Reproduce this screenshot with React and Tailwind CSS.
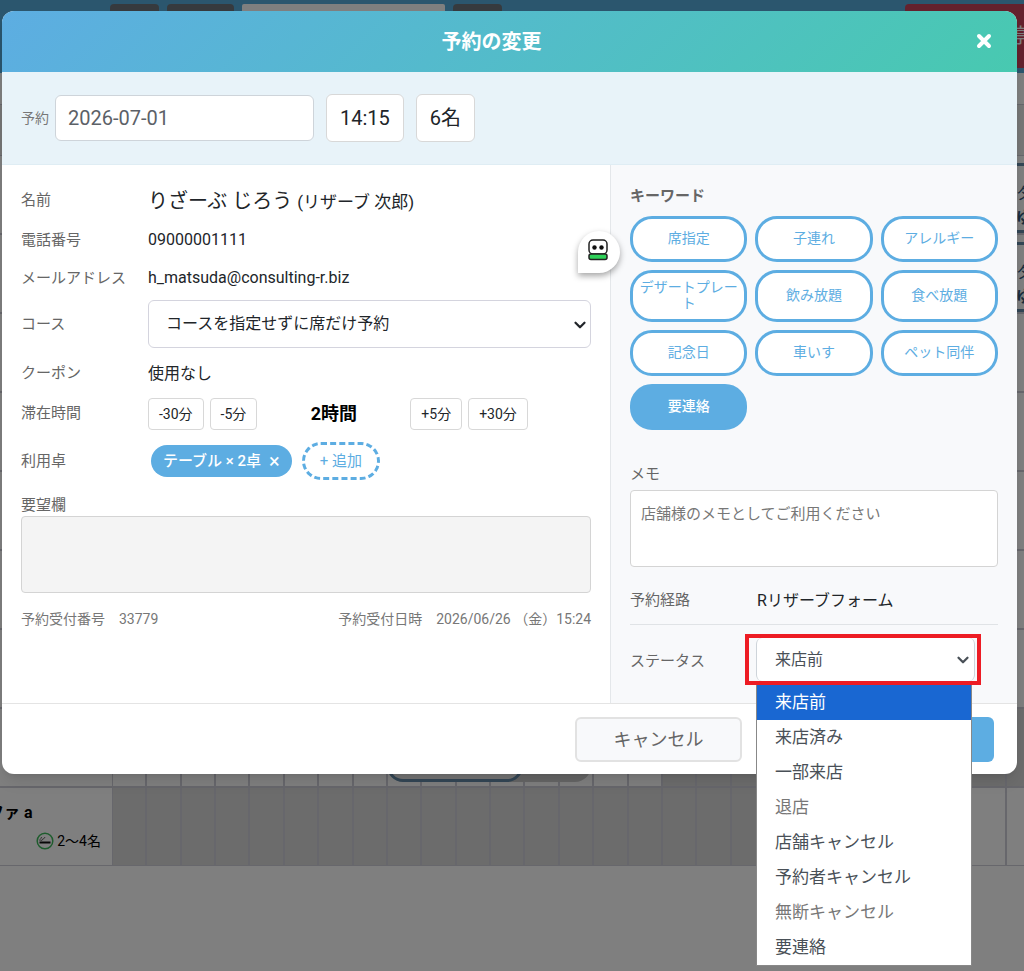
import { useState } from "react";
import { ChevronDown } from "lucide-react";
import clsx from "clsx";

const STATUSES = [
  { name: "来店前" },
  { name: "来店済み" },
  { name: "一部来店" },
  { name: "退店", muted: true },
  { name: "店舗キャンセル" },
  { name: "予約者キャンセル" },
  { name: "無断キャンセル", muted: true },
  { name: "要連絡" },
];

const KEYWORDS = [
  "席指定", "子連れ", "アレルギー",
  "デザートプレート", "飲み放題", "食べ放題",
  "記念日", "車いす", "ペット同伴",
  "要連絡",
];

// closedFrom / closedTo: range of 15 min slots that cannot be booked
const TABLES = [
  { id: 1, bookings: ["late"] },
  { id: 2, bookings: ["late"] },
  { id: 3 },
  { id: 4 },
  { id: 5 },
  { id: 6 },
  { id: 7 },
  { id: 8, closedFrom: 16, closedTo: 27, bookings: ["current"] },
  { id: 9, name: "ソファ a", seats: "2〜4名", closedFrom: 0, closedTo: 25 },
];

const SLOTS = Array.from({ length: 27 }, (_, i) => i);

function SmokingIcon() {
  return (
    <svg viewBox="0 0 18 18" className="h-[18px] w-[18px]" fill="none" aria-hidden>
      <circle cx="9" cy="9" r="7.800" stroke="#3cb95a" strokeWidth="1.500" />
      <path d="M3.500 10.500h11" stroke="#111" strokeWidth="2" />
      <path d="M4 9c-.5-2.500 1.500-2 1.500-4M5.500 9c0-2.500 3-1.500 3.500-4" stroke="#666" strokeWidth="1" />
    </svg>
  );
}

function TableRow({ table }) {
  const closed = (i) => i >= table.closedFrom && i < table.closedTo;
  return (
    <div className="flex h-[79px] border-b-2 border-[#ceced8] last:h-[78px] last:border-b">
      <div className="-ml-16 flex w-[177px] shrink-0 flex-col justify-center gap-1 border-r border-[#ceced8] bg-white pr-[11px]">
        {table.name && (
          <>
            <span className="pl-9 text-base font-bold leading-6 text-black">{table.name}</span>
            <span className="flex items-center justify-end gap-[3px] text-sm leading-6 text-black">
              <SmokingIcon />
              {table.seats}
            </span>
          </>
        )}
      </div>
      <div className="relative grid w-[928px] shrink-0 grid-cols-27">
        {SLOTS.map((i) => (
          <div key={i} className={clsx("border-r-2 border-[#ceced8]", closed(i) ? "bg-[#d8d8d8]" : "bg-white")} />
        ))}
        {table.bookings?.includes("late") && (
          <div className="absolute left-[893px] top-[7px] h-[70px] w-40 border-y-3 border-[#668caa] bg-white pl-2.5 pt-4 text-base leading-6 text-[#345a7c]">
            タ
            <br />
            <b>ゆ</b>
          </div>
        )}
        {table.bookings?.includes("current") && (
          <>
            <div className="absolute left-[380px] top-1 h-[69px] w-[98px] rounded-2xl bg-[#cbcbcb]" />
            <div className="absolute left-[274px] top-1 h-[69px] w-[136px] rounded-2xl border-3 border-[#668caa] bg-[#e9e9e9]" />
          </>
        )}
      </div>
    </div>
  );
}

function Timeline() {
  return (
    <div className="min-h-screen bg-white">
      <header className="flex h-[73px] items-start gap-2 bg-[#56acdc] pl-[110px] pt-1">
        <button type="button" aria-label="前日" className="h-10 w-[49px] rounded bg-[#6c757d]" />
        <button type="button" aria-label="本日" className="h-10 w-[67px] rounded bg-[#6c757d]" />
        <div className="h-10 w-[203px] rounded-xs bg-white" />
        <button type="button" aria-label="翌日" className="h-10 w-[49px] rounded bg-[#6c757d]" />
        <button type="button" className="-mr-16 ml-auto h-16 w-[183px] rounded bg-[#c9435b] pl-[103px] text-left text-xl text-white">
          停止
        </button>
      </header>
      <div className="h-[83px] border-b border-[#ceced8] bg-[#ececec]">
        <div className="h-8 border-b border-[#ceced8] bg-white" />
      </div>
      <div>
        {TABLES.map((t) => (
          <TableRow key={t.id} table={t} />
        ))}
      </div>
    </div>
  );
}

function Field({ label, className, children }) {
  return (
    <div className={clsx("flex items-center", className)}>
      <span className="w-[127px] shrink-0 text-[15px] text-[#666]">{label}</span>
      <div className="min-w-0 flex-1">{children}</div>
    </div>
  );
}

function StepButton({ children }) {
  return (
    <button type="button" className="h-8 shrink-0 rounded border border-[#d8d8d8] bg-white px-2.5 text-sm text-[#212529]">
      {children}
    </button>
  );
}

function AssistantBadge() {
  return (
    <button
      type="button"
      aria-label="RoboForm"
      className="absolute right-[-10px] top-[66px] z-10 flex h-[42px] w-[42px] items-center justify-center rounded-full rounded-bl-xs bg-white pb-1 pr-0.5 shadow-[0_3px_6px_rgba(0,0,0,0.35)]"
    >
      <svg viewBox="0 0 20 22" className="h-[22px] w-5" aria-hidden>
        <rect x="1" y="1" width="18" height="14" rx="4" fill="#fff" stroke="#222" strokeWidth="1.500" />
        <rect x="1" y="15" width="18" height="5.500" rx="2" fill="#2fd159" stroke="#222" strokeWidth="1.500" />
        <circle cx="6.500" cy="8.500" r="2.200" fill="#111" />
        <circle cx="13.500" cy="8.500" r="2.200" fill="#111" />
      </svg>
    </button>
  );
}

function BookingDetails() {
  return (
    <section className="px-[19px] pt-4">
      <Field label="名前" className="h-[39px]">
        <span className="text-xl text-[#212529]">
          りざーぶ じろう <span className="text-[17px]">(リザーブ 次郎)</span>
        </span>
      </Field>
      <Field label="電話番号" className="h-10">09000001111</Field>
      <Field label="メールアドレス" className="h-9">h_matsuda@consulting-r.biz</Field>
      <Field label={<label htmlFor="course">コース</label>} className="h-14">
        <div className="relative">
          <select
            id="course"
            className="h-12 w-full appearance-none rounded-md border border-[#d4d4de] bg-white pl-[17px] text-base text-[#212529]"
          >
            <option>コースを指定せずに席だけ予約</option>
          </select>
          <ChevronDown className="pointer-events-none absolute right-0.5 top-4 h-[18px] w-[18px]" strokeWidth={3} />
        </div>
      </Field>
      <Field label="クーポン" className="h-[43px]">使用なし</Field>
      <Field label="滞在時間" className="h-[37px]">
        <div className="flex items-center">
          <div className="flex gap-1.5">
            <StepButton>-30分</StepButton>
            <StepButton>-5分</StepButton>
          </div>
          <strong className="w-[153px] text-center text-lg text-black">2時間</strong>
          <div className="flex gap-1.5">
            <StepButton>+5分</StepButton>
            <StepButton>+30分</StepButton>
          </div>
        </div>
      </Field>
      <Field label="利用卓" className="h-[58px]">
        <div className="flex items-center gap-2.5 pl-[3px]">
          <span className="flex h-8 items-center gap-2 rounded-full bg-[#5dade2] px-3 text-[15px] font-medium text-white">
            テーブル × 2卓
            <button type="button" aria-label="テーブルを外す" className="text-xl font-normal leading-5">×</button>
          </span>
          <button type="button" className="h-[38px] rounded-full border-3 border-dashed border-[#5dade2] px-[15px] text-[15px] text-[#5dade2]">
            + 追加
          </button>
        </div>
      </Field>
      <label htmlFor="request" className="block pt-1 text-[15px] leading-[22px] text-[#666]">要望欄</label>
      <textarea
        id="request"
        readOnly
        className="block h-[77px] w-full resize-none rounded border border-[#d4d4d4] bg-[#f4f4f4]"
      />
      <div className="flex justify-between pt-4 text-sm text-[#777]">
        <p className="flex gap-3.5">
          <span>予約受付番号</span>
          <span>33779</span>
        </p>
        <p className="flex gap-3.5">
          <span>予約受付日時</span>
          <span>2026/06/26 （金）15:24</span>
        </p>
      </div>
    </section>
  );
}

function SidePanel() {
  const [selected, setSelected] = useState(["要連絡"]);
  const [status, setStatus] = useState("来店前");

  const toggle = (k) =>
    setSelected((prev) => (prev.includes(k) ? prev.filter((x) => x !== k) : [...prev, k]));

  return (
    <section className="border-l border-[#e4e7ea] bg-[#f8f9fb] px-[19px] pb-[18px] pt-5">
      <h3 className="text-[15px] font-bold leading-[22px] text-[#666]">キーワード</h3>
      <div className="mt-[9px] grid grid-cols-3 gap-2">
        {KEYWORDS.map((k) => (
          <button
            key={k}
            type="button"
            aria-pressed={selected.includes(k)}
            onClick={() => toggle(k)}
            className={clsx(
              "min-h-[46px] rounded-[22px] border-3 border-[#5dade2] px-1.5 pb-2 pt-1.5 text-sm leading-4",
              selected.includes(k) ? "bg-[#5dade2] font-medium text-white" : "bg-white text-[#5dade2]"
            )}
          >
            {k}
          </button>
        ))}
      </div>

      <label htmlFor="memo" className="mb-1 mt-8 block text-[15px] leading-6 text-[#666]">メモ</label>
      <textarea
        id="memo"
        placeholder="店舗様のメモとしてご利用ください"
        className="block h-[77px] w-full resize-none rounded border border-[#d4d4d4] bg-white px-2.5 py-3 text-[15px] placeholder:text-[#777]"
      />

      <div className="mt-2.5 flex h-12 items-center border-b border-[#e0e3e6]">
        <span className="w-[127px] text-[15px] text-[#666]">予約経路</span>
        <span>Rリザーブフォーム</span>
      </div>

      <div className="flex items-center pt-[9px]">
        <label htmlFor="status" className="w-[115px] shrink-0 pt-1 text-[15px] text-[#666]">ステータス</label>
        <div className="relative mr-[17px] h-[51px] min-w-0 flex-1 border-4 border-[#ed1c24] pl-[7px] pr-0.5">
          <select
            id="status"
            value={status}
            onChange={(e) => setStatus(e.target.value)}
            className="h-full w-full appearance-none rounded-md border-x border-[#ced4da] bg-white pl-[18px] text-base text-[#495057]"
          >
            {STATUSES.map((s) => (
              <option key={s.name}>{s.name}</option>
            ))}
          </select>
          <ChevronDown className="pointer-events-none absolute right-[5px] top-[13px] h-[18px] w-[18px] text-[#495057]" strokeWidth={3} />
          <ul role="listbox" aria-label="ステータス" className="absolute left-[7px] right-[5px] top-[47px] z-20 border border-t-0 border-[#888] bg-white">
            {STATUSES.map((s) => (
              <li
                key={s.name}
                role="option"
                aria-selected={s.name === status}
                onClick={() => setStatus(s.name)}
                className={clsx(
                  "h-[35px] pl-[18px] text-[17px] leading-[35px]",
                  s.name === status ? "bg-[#1967d2] text-white" : s.muted ? "text-[#777]" : "text-[#495057]"
                )}
              >
                {s.name}
              </li>
            ))}
          </ul>
        </div>
      </div>
    </section>
  );
}

function EditDialog() {
  return (
    <div role="dialog" aria-modal="true" aria-labelledby="dialog-title" className="rounded-xl bg-white shadow-lg">
      <div className="relative flex h-[61px] items-center justify-center rounded-t-xl bg-linear-135 from-[#5dade2] to-[#48c9b0] pr-9">
        <h2 id="dialog-title" className="text-xl font-bold text-white">予約の変更</h2>
        <button type="button" aria-label="閉じる" className="absolute right-[25px] top-[22px]">
          <svg viewBox="0 0 16 16" className="h-4 w-4" aria-hidden>
            <path d="M3 3l10 10M13 3L3 13" stroke="#fff" strokeWidth="4" strokeLinecap="round" />
          </svg>
        </button>
      </div>

      <div className="flex h-[93px] items-center border-b border-[#dfedf4] bg-[#e8f3f9] px-[19px]">
        <label htmlFor="date" className="text-sm text-[#777]">予約</label>
        <input
          id="date"
          type="text"
          defaultValue="2026-07-01"
          className="ml-1.5 h-[46px] w-[259px] rounded-md border border-[#ced4da] bg-white px-3 text-xl text-[#5c6167]"
        />
        <button type="button" className="ml-3 h-12 rounded-md border border-[#d8d8d8] bg-white px-[13px] text-xl text-[#212529]">14:15</button>
        <button type="button" className="ml-3 h-12 rounded-md border border-[#d8d8d8] bg-white px-[13px] text-xl text-[#212529]">6名</button>
      </div>

      <div className="grid grid-cols-[1.494fr_1fr]">
        <div className="relative">
          <BookingDetails />
          <AssistantBadge />
        </div>
        <SidePanel />
      </div>

      <div className="flex justify-end gap-4 border-t border-[#e4e4e4] pb-3 pr-[23px] pt-[13px]">
        <button type="button" className="h-[45px] w-[167px] rounded-md border-2 border-[#e2e2e2] bg-[#f8f9fb] text-lg text-[#666]">
          キャンセル
        </button>
        <button type="button" aria-label="変更する" className="h-[45px] w-[236px] rounded-md bg-[#5dade2]" />
      </div>
    </div>
  );
}

export default function App() {
  return (
    <div className="relative h-screen overflow-hidden font-['Roboto','Noto_Sans_CJK_JP',sans-serif] text-base text-[#212529]" lang="ja">
      <Timeline />
      <div className="absolute inset-0 bg-black/50 pl-0.5 pr-[7px] pt-[11px]">
        <EditDialog />
      </div>
    </div>
  );
}
